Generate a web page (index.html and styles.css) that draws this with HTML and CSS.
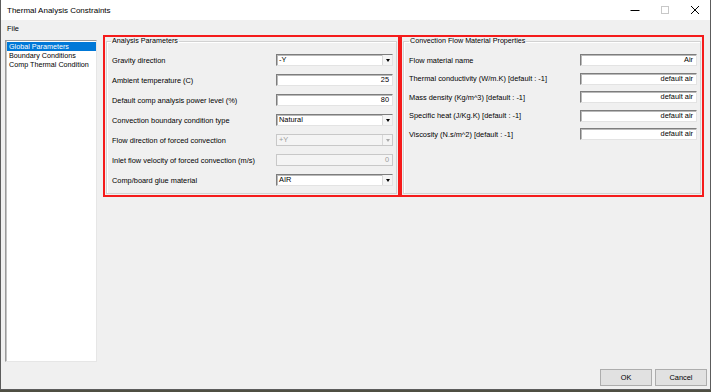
FILE: index.html
```html
<!DOCTYPE html>
<html lang="en">
<head>
    <meta charset="UTF-8">
    <title>Thermal Analysis Constraints</title>
    <link rel="stylesheet" href="styles.css">
</head>
<body>
    <div class="window">
        <div class="titlebar">
            <span class="title">Thermal Analysis Constraints</span>
            <div class="caption-buttons">
                <span class="caption-btn">
                    <svg width="10" height="10" viewBox="0 0 10 10"><path d="M0.5 5.5h9" stroke="#000" stroke-width="1" fill="none"/></svg>
                </span>
                <span class="caption-btn">
                    <svg width="10" height="10" viewBox="0 0 10 10"><rect x="1.5" y="1.5" width="7" height="7" stroke="#c8c8c8" stroke-width="1" fill="none"/></svg>
                </span>
                <span class="caption-btn">
                    <svg width="10" height="10" viewBox="0 0 10 10"><path d="M1 1l8 8M9 1l-8 8" stroke="#000" stroke-width="1" fill="none"/></svg>
                </span>
            </div>
        </div>

        <div class="menubar"><span class="menu-item">File</span></div>

        <div class="main">
            <ul class="tree">
                <li class="selected">Global Parameters</li>
                <li>Boundary Conditions</li>
                <li>Comp Thermal Condition</li>
            </ul>

            <div class="panels">
                <div class="mark mark-left">
                    <fieldset class="group">
                        <legend>Analysis Parameters</legend>
                        <div class="rows rows-wide">
                            <div class="row">
                                <label>Gravity direction</label>
                                <div class="combo"><span class="value">-Y</span><span class="arrow"></span></div>
                            </div>
                            <div class="row">
                                <label>Ambient temperature (C)</label>
                                <div class="field">25</div>
                            </div>
                            <div class="row">
                                <label>Default comp analysis power level (%)</label>
                                <div class="field">80</div>
                            </div>
                            <div class="row">
                                <label>Convection boundary condition type</label>
                                <div class="combo"><span class="value">Natural</span><span class="arrow"></span></div>
                            </div>
                            <div class="row">
                                <label>Flow direction of forced convection</label>
                                <div class="combo disabled"><span class="value">+Y</span><span class="arrow"></span></div>
                            </div>
                            <div class="row">
                                <label>Inlet flow velocity of forced convection (m/s)</label>
                                <div class="field disabled">0</div>
                            </div>
                            <div class="row">
                                <label>Comp/board glue material</label>
                                <div class="combo"><span class="value">AIR</span><span class="arrow"></span></div>
                            </div>
                        </div>
                    </fieldset>
                </div>

                <div class="mark mark-right">
                    <fieldset class="group">
                        <legend>Convection Flow Material Properties</legend>
                        <div class="rows rows-tight">
                            <div class="row">
                                <label>Flow material name</label>
                                <div class="field">Air</div>
                            </div>
                            <div class="row">
                                <label>Thermal conductivity (W/m.K) [default : -1]</label>
                                <div class="field">default air</div>
                            </div>
                            <div class="row">
                                <label>Mass density (Kg/m^3) [default : -1]</label>
                                <div class="field">default air</div>
                            </div>
                            <div class="row">
                                <label>Specific heat (J/Kg.K) [default : -1]</label>
                                <div class="field">default air</div>
                            </div>
                            <div class="row">
                                <label>Viscosity (N.s/m^2) [default : -1]</label>
                                <div class="field">default air</div>
                            </div>
                        </div>
                    </fieldset>
                </div>
            </div>
        </div>

        <div class="footer">
            <button class="dlg-button">OK</button>
            <button class="dlg-button">Cancel</button>
        </div>
    </div>
</body>
</html>
```

FILE: styles.css
```css
body {
    margin: 0;
    width: 711px;
    height: 392px;
    overflow: hidden;
    background-color: #4f4f42;
    font-family: "Liberation Sans", Arial, sans-serif;
    font-size: 7.4px;
    color: #000000;
}

.window {
    width: 709px;
    height: 389px;
    border: 1px solid #5c5c5c;
    border-top: none;
    background-color: #f0f0f0;
    display: flex;
    flex-direction: column;
}

/* title bar */
.titlebar {
    height: 20px;
    background-color: #ffffff;
    display: flex;
    align-items: center;
    padding-left: 6px;
}

.title {
    font-size: 8px;
}

.caption-buttons {
    margin-left: auto;
    display: flex;
    height: 100%;
}

.caption-btn {
    width: 30px;
    display: flex;
    align-items: center;
    justify-content: center;
}

/* menu */
.menubar {
    height: 15px;
    padding: 2px 0 0 6px;
    box-sizing: border-box;
    line-height: 13px;
}

/* main area */
.main {
    display: flex;
    height: 327px;
    padding-left: 4px;
}

.tree {
    list-style: none;
    margin: 5px 0 0 0;
    padding: 1px 0 0 1px;
    width: 92px;
    height: 322px;
    box-sizing: border-box;
    background-color: #ffffff;
    border: 1px solid;
    border-color: #9a9a9a #e6e6e6 #e6e6e6 #9a9a9a;
    box-shadow: inset 1px 0 0 #c4c4c4;
    font-size: 7.2px;
}

.tree li {
    height: 9px;
    line-height: 9px;
    padding-left: 2px;
    white-space: nowrap;
}

.tree li.selected {
    background-color: #0078d7;
    color: #ffffff;
    height: 8.5px;
}

.panels {
    display: flex;
    margin-left: 6px;
    align-items: flex-start;
}

/* red outline boxes */
.mark {
    border: 2px solid #f51b1b;
    height: 162px;
    box-sizing: border-box;
    padding: 0 1px 1px 1px;
    display: flex;
}

.mark-left {
    width: 297px;
}

.mark-right {
    width: 304px;
}

/* group boxes */
.group {
    flex: 1;
    margin: 0;
    min-width: 0;
    padding: 0 3px 2px 4px;
    border: 1px solid #d2d2d2;
    box-shadow: inset 1px 1px 0 #ffffff;
}

.mark-right .group {
    padding-left: 5px;
}

.group legend {
    padding: 0 1px;
    line-height: 8px;
    font-size: 7.2px;
}

.rows-wide {
    padding-top: 5px;
}

.rows-tight {
    padding-top: 6px;
}

.row {
    display: flex;
    align-items: center;
    justify-content: space-between;
    height: 20px;
}

.rows-tight .row {
    height: 18.5px;
}

.row label {
    padding-left: 1px;
    white-space: nowrap;
}

.rows-tight .row label {
    padding-left: 0;
}

/* inputs */
.field,
.combo {
    width: 117px;
    height: 12px;
    box-sizing: border-box;
    background-color: #ffffff;
    border: 1px solid;
    border-color: #7d7d7d #e3e3e3 #e3e3e3 #7d7d7d;
    box-shadow: inset 1px 1px 0 #b9b9b9;
    line-height: 10px;
}

.field {
    text-align: right;
    padding: 0 3px 0 2px;
}

.combo {
    display: flex;
    align-items: stretch;
}

.combo .value {
    flex: 1;
    padding-left: 2px;
}

.combo .arrow {
    width: 9px;
    border-left: 1px solid #d8d8d8;
    background-color: #f4f4f4;
    display: flex;
    align-items: center;
    justify-content: center;
}

.combo .arrow::after {
    content: "";
    border-left: 2.5px solid transparent;
    border-right: 2.5px solid transparent;
    border-top: 3px solid #000000;
}

.disabled {
    background-color: #f4f4f4;
    color: #9c9c9c;
    border-color: #c8c8c8;
    box-shadow: none;
}

.combo.disabled .arrow::after {
    border-top-color: #a8a8a8;
}

/* footer buttons */
.footer {
    display: flex;
    justify-content: flex-end;
    gap: 3px;
    margin-top: 7px;
    padding-right: 3px;
}

.dlg-button {
    width: 52px;
    height: 17px;
    padding: 0;
    border: 1px solid #adadad;
    background-color: #e1e1e1;
    font-family: "Liberation Sans", Arial, sans-serif;
    font-size: 7.4px;
    color: #000000;
}
```
